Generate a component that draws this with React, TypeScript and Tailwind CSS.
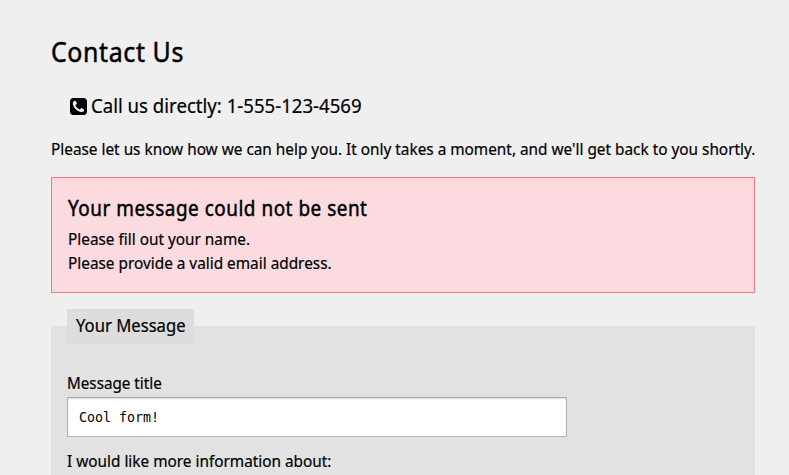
const heading = "origin-left whitespace-nowrap font-['Noto_Sans',sans-serif] font-normal [-webkit-text-stroke:0.5px_black]";
const body = "w-max origin-left scale-x-[0.959] whitespace-nowrap text-base leading-6";

function PhoneSquare() {
  return (
    <svg viewBox="0 128 1536 1536" className="size-[17px] shrink-0" fill="currentColor" fillRule="evenodd" aria-hidden="true">
      <path d="M1280 1193q0-11-2-16t-18-16.5-40.5-25-47.5-26.5-45.5-25-28.5-15q-5-3-19-13t-25-15-21-5q-15 0-36.5 20.5t-39.5 45-38.5 45-33.5 20.5q-7 0-16.5-3.5t-15.5-6.5-17-9.5-14-8.5q-99-55-170-126.5t-127-170.5q-2-3-8.5-14t-9.5-17-6.5-15.5-3.5-16.5q0-13 20.5-33.5t45-38.5 45-39.5 20.5-36.5q0-10-5-21t-15-25-13-19q-3-6-15-28.5t-25-45.5-26.5-47.5-25-40.5-16.5-18-16-2q-48 0-101 22-46 21-80 94.5t-34 130.5q0 16 2.5 34t5 30.5 9 33 10 29.5 12.5 33 11 30q60 164 216.5 320.5t320.5 216.5q6 2 30 11t33 12.5 29.5 10 33 9 30.5 5 34 2.5q57 0 130.5-34t94.5-80q22-53 22-101zM1536 416v960q0 119-84.5 203.5t-203.5 84.5h-960q-119 0-203.5-84.5t-84.5-203.5v-960q0-119 84.5-203.5t203.5-84.5h960q119 0 203.5 84.5t84.5 203.5z" />
    </svg>
  );
}

export default function App() {
  return (
    <main className="h-[475px] w-full overflow-hidden bg-[#efefef] pl-[51px] pr-[34px] pt-[31px] font-['Noto_Sans','Open_Sans',sans-serif] text-black [-webkit-text-stroke:0.2px_black]">
      <h1 className={`${heading} h-[41px] w-max scale-x-[0.89] text-[28px] leading-10 tracking-[0.7px]`}>Contact Us</h1>
      <div className="ml-[19px] mt-[19px] flex h-[30px] items-center gap-1">
        <PhoneSquare />
        <p className="w-max origin-left scale-x-[0.93] whitespace-nowrap text-[20px] leading-[30px]">Call us directly: 1-555-123-4569</p>
      </div>
      <p className={`${body} mt-4 h-6`}>
        Please let us know how we can help you. It only takes a moment, and we'll get back to you shortly.
      </p>
      <section className="mt-4 h-[116px] border border-[#f8777f] bg-[#fbdbdf] pl-4 pt-[13px]">
        <h2 className={`${heading} h-9 w-max scale-x-[0.86] text-[22px] leading-[32px] tracking-[0.6px]`}>Your message could not be sent</h2>
        <p className={body}>Please fill out your name.</p>
        <p className={body}>Please provide a valid email address.</p>
      </section>
      <form className="mt-[33px] h-[200px] bg-[#e2e2e2] pl-4">
        <div className="-mt-[17px] inline-block h-[35px] w-[127px] bg-[#dddddd] pl-[9px] align-top">
          <span className="inline-block origin-left scale-x-[0.925] whitespace-nowrap text-lg leading-8">Your Message</span>
        </div>
        <label htmlFor="title" className="mt-[21px] block h-[26px] w-max origin-left scale-x-[0.95] whitespace-nowrap text-base leading-6">
          Message title
        </label>
        <input
          id="title"
          defaultValue="Cool form!"
          className="block h-10 w-[500px] border border-[#b4b4b4] border-t-[#a5a5a5] bg-white px-[11px] font-['DejaVu_Sans_Mono',monospace] text-[13.3px] shadow-[inset_0_1px_2px_#dddddd] outline-none [-webkit-text-stroke:0]"
        />
        <p className={`${body} mt-3`}>I would like more information about:</p>
      </form>
    </main>
  );
}
